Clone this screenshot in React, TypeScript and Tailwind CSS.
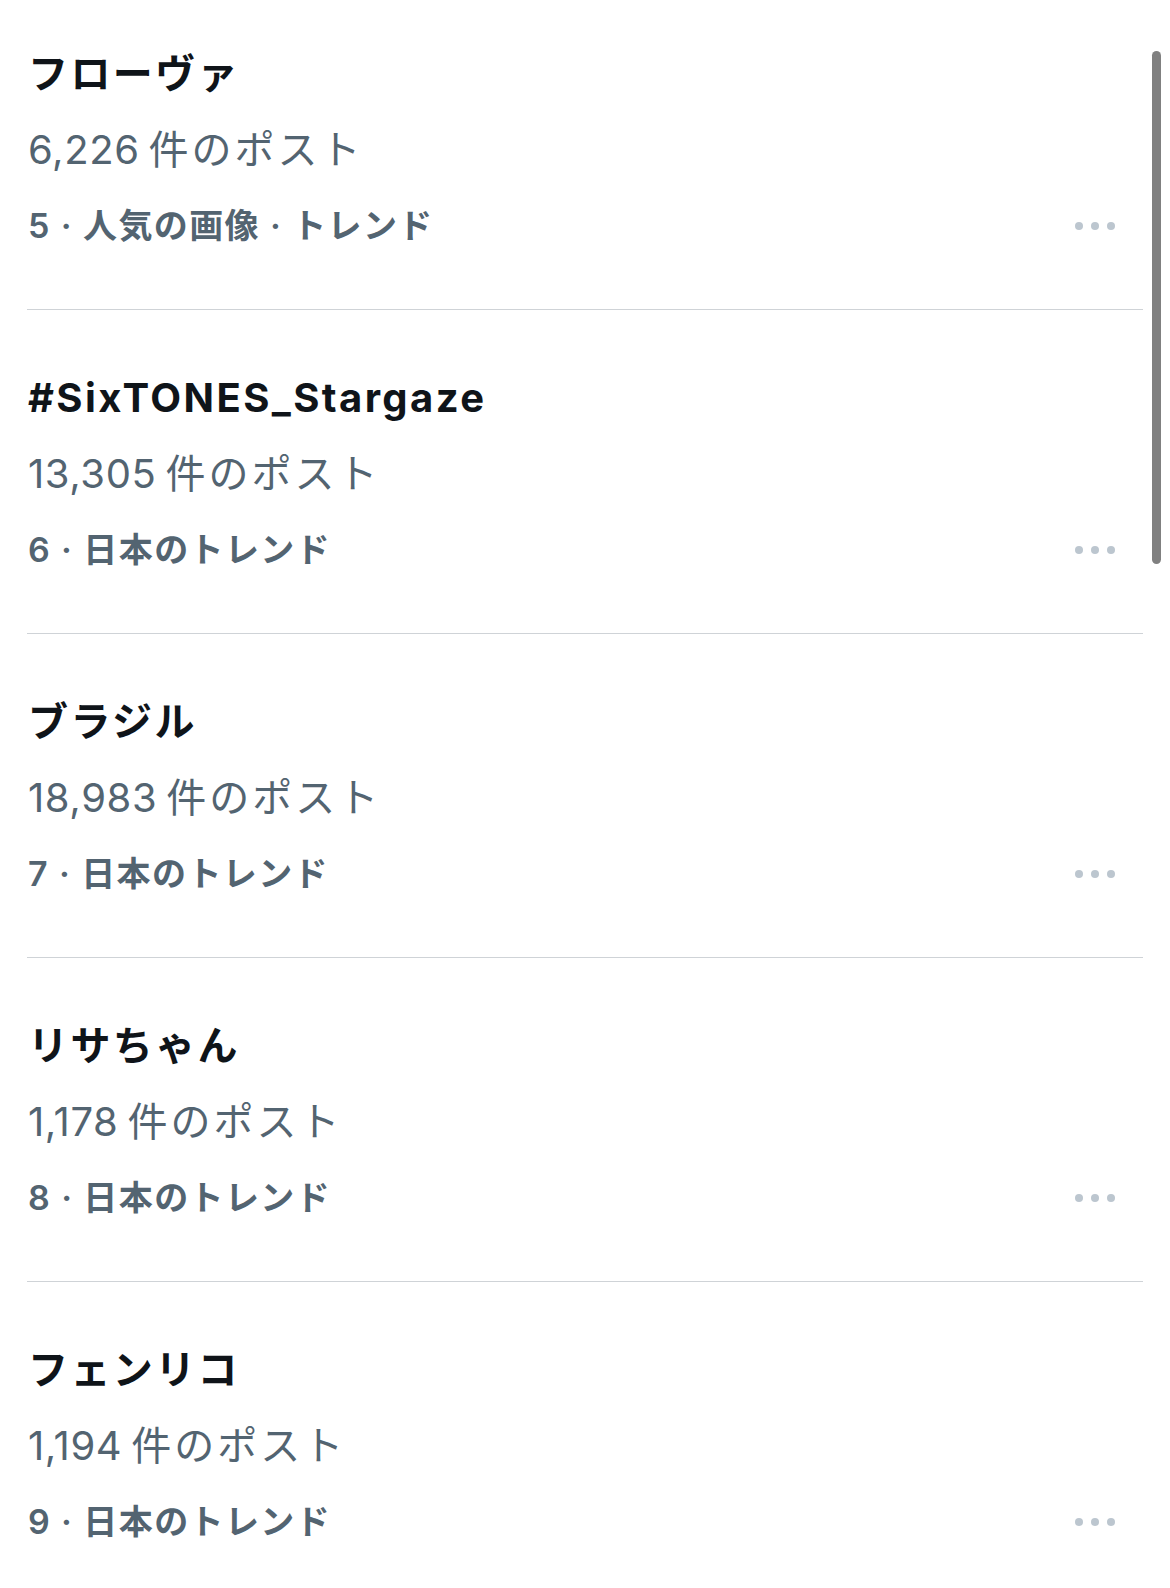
const trends = [
  { rank: 5, title: "フローヴァ", count: "6,226", context: "人気の画像 · トレンド" },
  { rank: 6, title: "#SixTONES_Stargaze", count: "13,305", context: "日本のトレンド" },
  { rank: 7, title: "ブラジル", count: "18,983", context: "日本のトレンド" },
  { rank: 8, title: "リサちゃん", count: "1,178", context: "日本のトレンド" },
  { rank: 9, title: "フェンリコ", count: "1,194", context: "日本のトレンド" },
];

function MoreDots() {
  return (
    <div className="flex items-center gap-[8px]">
      <span className="w-[8px] h-[8px] rounded-full bg-[#bcc6cf]" />
      <span className="w-[8px] h-[8px] rounded-full bg-[#bcc6cf]" />
      <span className="w-[8px] h-[8px] rounded-full bg-[#bcc6cf]" />
    </div>
  );
}

export default function App() {
  return (
    <div
      className="relative w-[1170px] h-[1588px] overflow-hidden bg-white"
      style={{ fontFamily: '"Inter", "Noto Sans CJK JP", sans-serif' }}
    >
      <div className="px-[27px]">
        {trends.map((t, i) => (
          <div
            key={t.rank}
            className={
              "border-b border-[#cfd3d7] pb-[45px] " + (i === 0 ? "pt-[36px]" : "pt-[50px]")
            }
          >
            <div className="pl-[1px] text-[40px] leading-[76px] font-bold text-[#0f1419] tracking-[2.4px]">
              {t.title}
            </div>
            <div className="pl-[1px] text-[40px] leading-[76px] text-[#536471] tracking-[0.6px]">
              {t.count}
              <span className="ml-[9px] tracking-[3px]">件のポスト</span>
            </div>
            <div className="flex items-center justify-between pr-[28px]">
              <div className="pl-[1px] text-[34px] leading-[76px] font-semibold text-[#536471] tracking-[1.4px]">
                {t.rank} · {t.context}
              </div>
              <MoreDots />
            </div>
          </div>
        ))}
      </div>
      {/* scroll indicator */}
      <div className="absolute left-[1152px] top-[51px] w-[9px] h-[513px] rounded-full bg-[#808080]" />
    </div>
  );
}
